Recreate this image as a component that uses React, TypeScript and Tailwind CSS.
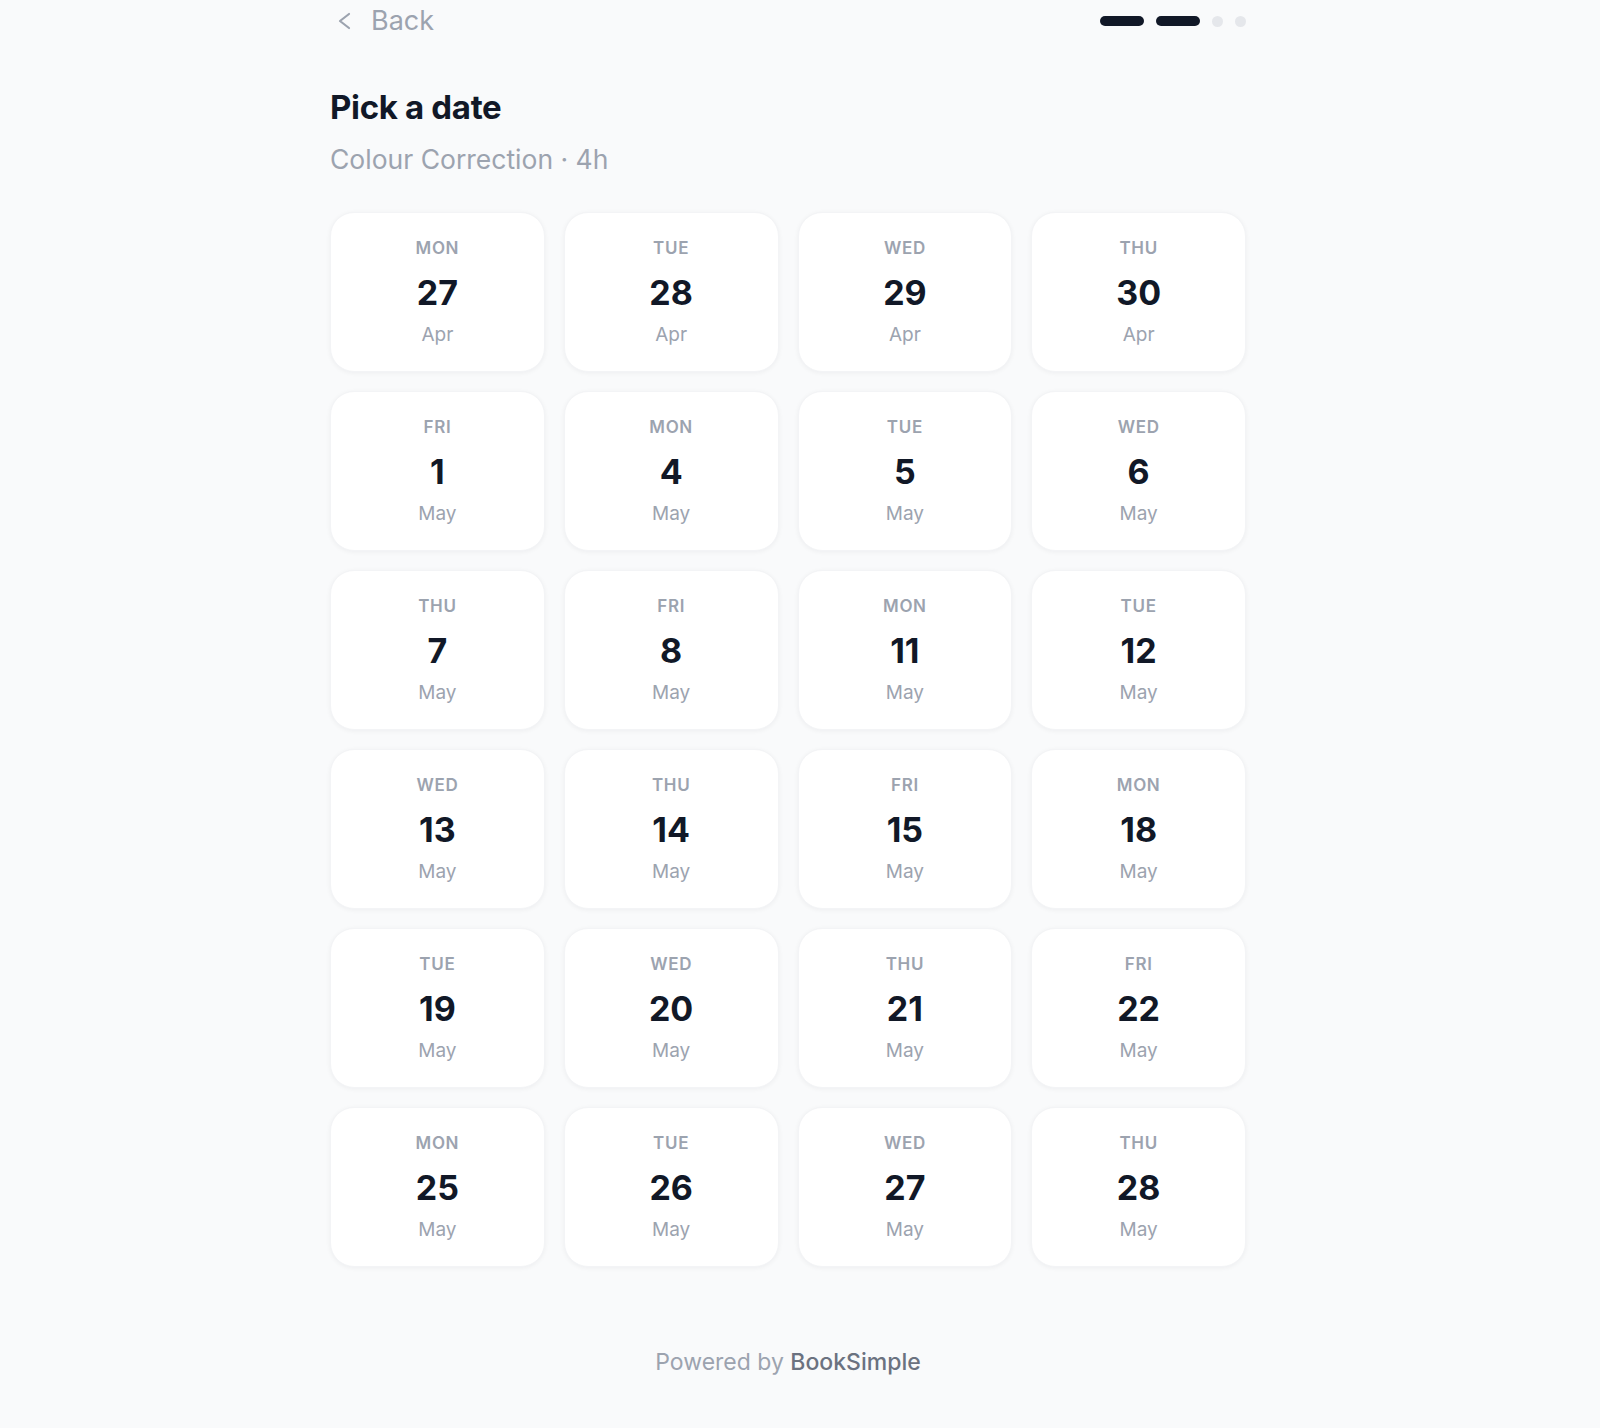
import { ReactNode } from "react";

type Day = { dow: string; day: number; month: string };

const days: Day[] = [
  { dow: "MON", day: 27, month: "Apr" },
  { dow: "TUE", day: 28, month: "Apr" },
  { dow: "WED", day: 29, month: "Apr" },
  { dow: "THU", day: 30, month: "Apr" },
  { dow: "FRI", day: 1, month: "May" },
  { dow: "MON", day: 4, month: "May" },
  { dow: "TUE", day: 5, month: "May" },
  { dow: "WED", day: 6, month: "May" },
  { dow: "THU", day: 7, month: "May" },
  { dow: "FRI", day: 8, month: "May" },
  { dow: "MON", day: 11, month: "May" },
  { dow: "TUE", day: 12, month: "May" },
  { dow: "WED", day: 13, month: "May" },
  { dow: "THU", day: 14, month: "May" },
  { dow: "FRI", day: 15, month: "May" },
  { dow: "MON", day: 18, month: "May" },
  { dow: "TUE", day: 19, month: "May" },
  { dow: "WED", day: 20, month: "May" },
  { dow: "THU", day: 21, month: "May" },
  { dow: "FRI", day: 22, month: "May" },
  { dow: "MON", day: 25, month: "May" },
  { dow: "TUE", day: 26, month: "May" },
  { dow: "WED", day: 27, month: "May" },
  { dow: "THU", day: 28, month: "May" },
];

const Steps = ({ current, total }: { current: number; total: number }) => (
  <div className="flex items-center gap-[12px]">
    {Array.from({ length: total }).map((_, i) =>
      i < current ? (
        <span key={i} className="h-[10px] w-[44px] rounded-full bg-[#111827]" />
      ) : (
        <span key={i} className="h-[11px] w-[11px] rounded-full bg-[#e5e7eb]" />
      )
    )}
  </div>
);

const DateCard = ({ d }: { d: Day }): ReactNode => (
  <button className="flex h-[160px] flex-col items-center justify-center rounded-[24px] border border-[#f3f4f6] bg-white shadow-[0_1px_5px_rgba(15,23,42,0.05)]">
    <span className="text-[17px] leading-[20px] font-semibold tracking-[0.04em] text-[#9ca3af]">{d.dow}</span>
    <span className="mt-[15px] text-[34px] leading-[40px] font-bold text-[#111827]">{d.day}</span>
    <span className="mt-[10px] text-[19px] leading-[24px] text-[#9ca3af]">{d.month}</span>
  </button>
);

export default function App() {
  return (
    <div className="min-h-screen bg-[#f9fafb] font-['Inter',sans-serif]">
      <div className="w-[1576px]">
        <div className="mx-auto w-[916px] pb-[52px]">
          <div className="flex h-[42px] items-center justify-between">
            <button className="flex items-center gap-[19px] text-[27px] text-[#9ca3af]">
              <svg width="16" height="18" viewBox="0 0 16 18" className="ml-[6px]">
                <path d="M13 2 L4 9 L13 16" fill="none" stroke="#9ca3af" strokeWidth="2.2" strokeLinecap="round" strokeLinejoin="round" />
              </svg>
              Back
            </button>
            <Steps current={2} total={4} />
          </div>

          <h1 className="mt-[45px] text-[33px] leading-[40px] font-bold tracking-[-0.01em] text-[#111827]">Pick a date</h1>
          <p className="mt-[16px] text-[26.5px] leading-[32px] text-[#9ca3af]">Colour Correction · 4h</p>

          <div className="mt-[37px] grid grid-cols-4 gap-[19px]">
            {days.map((d, i) => (
              <DateCard key={i} d={d} />
            ))}
          </div>

          <p className="mt-[81px] text-center text-[23px] leading-[28px] text-[#9ca3af]">
            Powered by <span className="font-medium text-[#6b7280]">BookSimple</span>
          </p>
        </div>
      </div>
    </div>
  );
}
